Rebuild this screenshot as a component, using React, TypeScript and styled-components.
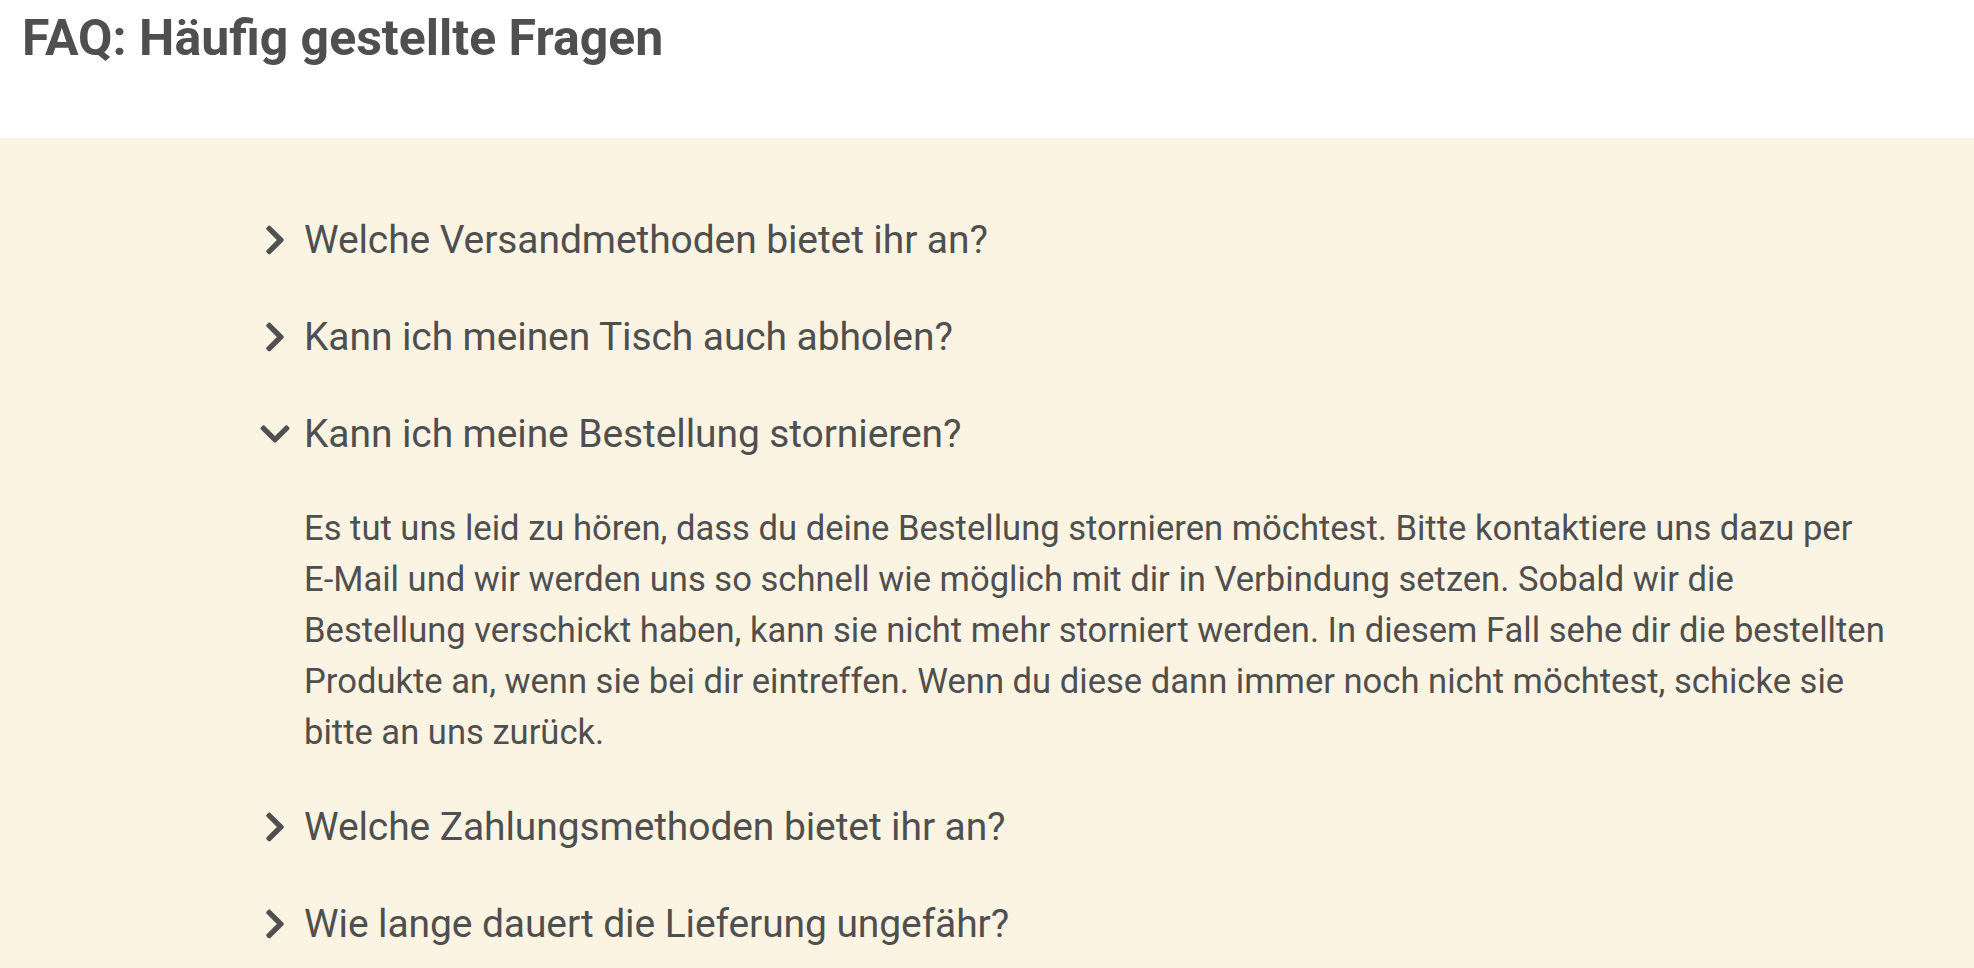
import React, { useState } from "react";
import styled, { createGlobalStyle } from "styled-components";
import { FaChevronRight, FaChevronDown } from "react-icons/fa";

const GlobalStyle = createGlobalStyle`
  html, body {
    margin: 0;
    padding: 0;
    background: #ffffff;
  }
  body {
    font-family: Roboto, "Open Sans", sans-serif;
    color: #505050;
  }
`;

const PageHeader = styled.header`
  height: 138px;
  padding: 12px 0 0 22px;
  box-sizing: border-box;
`;

const PageTitle = styled.h1`
  margin: 0;
  font-size: 50px;
  line-height: 52px;
  font-weight: 700;
  color: #4f4f4f;
`;

const FaqBand = styled.section`
  background: #fcf4e3;
  padding: 53px 0 40px;
  min-height: 830px;
  box-sizing: border-box;
`;

const FaqList = styled.div`
  margin-left: 258px;
  width: 1690px;
  display: flex;
  flex-direction: column;
`;

const FaqItem = styled.div`
  display: flex;
  flex-direction: column;
`;

const QuestionRow = styled.button`
  display: flex;
  align-items: center;
  height: 97px;
  padding: 0;
  border: 0;
  background: none;
  cursor: pointer;
  text-align: left;
  font-family: inherit;
  color: #4f4f4f;
`;

const IconSlot = styled.span`
  width: 46px;
  display: flex;
  align-items: center;
  color: #505050;
  font-size: 34px;
`;

const QuestionText = styled.span`
  font-size: 39px;
  font-weight: 400;
  letter-spacing: -0.1px;
`;

const Answer = styled.p`
  margin: 0;
  padding: 21px 0 20px 46px;
  font-size: 34.6px;
  line-height: 51px;
  color: #4f4f4f;
  white-space: nowrap;
`;

type Faq = { q: string; a?: string[] };

const faqs: Faq[] = [
  { q: "Welche Versandmethoden bietet ihr an?" },
  { q: "Kann ich meinen Tisch auch abholen?" },
  {
    q: "Kann ich meine Bestellung stornieren?",
    a: [
      "Es tut uns leid zu hören, dass du deine Bestellung stornieren möchtest. Bitte kontaktiere uns dazu per",
      "E-Mail und wir werden uns so schnell wie möglich mit dir in Verbindung setzen. Sobald wir die",
      "Bestellung verschickt haben, kann sie nicht mehr storniert werden. In diesem Fall sehe dir die bestellten",
      "Produkte an, wenn sie bei dir eintreffen. Wenn du diese dann immer noch nicht möchtest, schicke sie",
      "bitte an uns zurück.",
    ],
  },
  { q: "Welche Zahlungsmethoden bietet ihr an?" },
  { q: "Wie lange dauert die Lieferung ungefähr?" },
];

const App = () => {
  const [open, setOpen] = useState<number | null>(2);

  return (
    <>
      <GlobalStyle />
      <PageHeader>
        <PageTitle>FAQ: Häufig gestellte Fragen</PageTitle>
      </PageHeader>
      <FaqBand>
        <FaqList>
          {faqs.map((item, i) => {
            const isOpen = open === i;
            return (
              <FaqItem key={item.q}>
                <QuestionRow onClick={() => setOpen(isOpen ? null : i)}>
                  <IconSlot>{isOpen ? <FaChevronDown /> : <FaChevronRight />}</IconSlot>
                  <QuestionText>{item.q}</QuestionText>
                </QuestionRow>
                {isOpen && item.a && (
                  <Answer>
                    {item.a.map((line, j) => (
                      <React.Fragment key={j}>
                        {line}
                        {j < item.a!.length - 1 && <br />}
                      </React.Fragment>
                    ))}
                  </Answer>
                )}
              </FaqItem>
            );
          })}
        </FaqList>
      </FaqBand>
    </>
  );
};

export default App;
